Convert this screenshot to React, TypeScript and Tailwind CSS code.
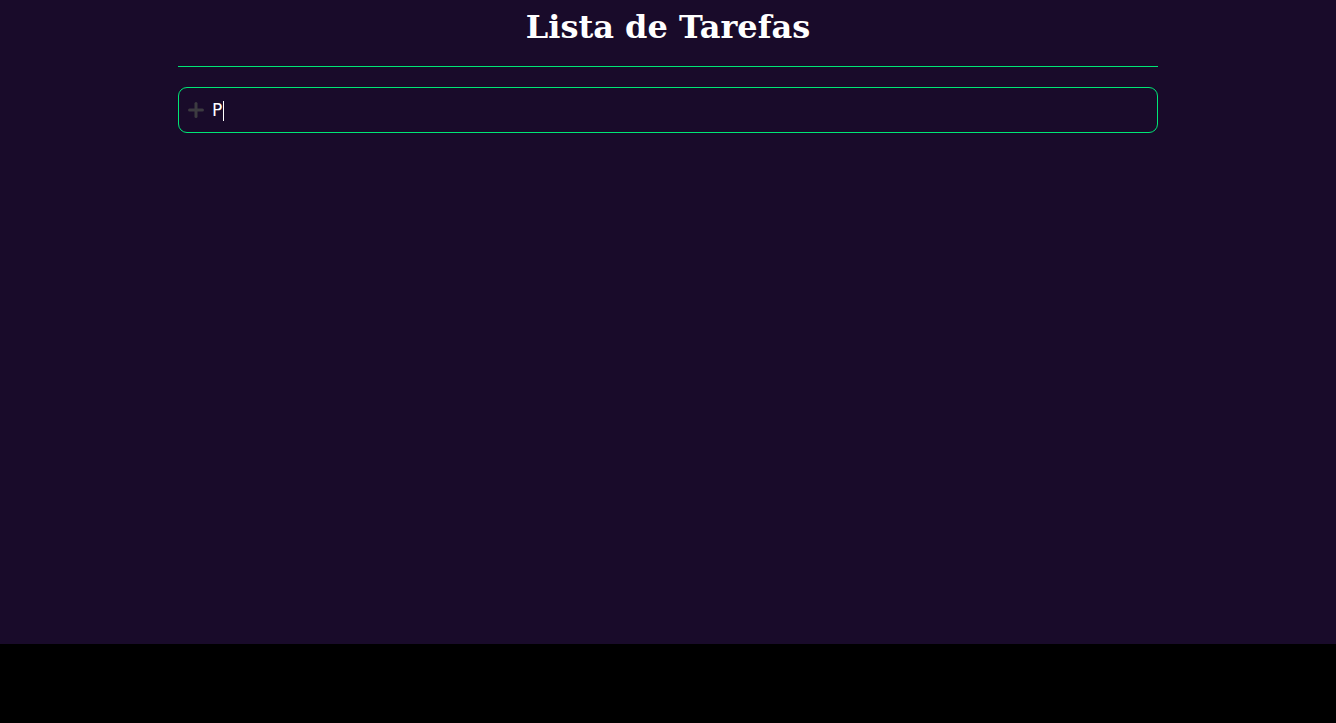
import { Plus } from "lucide-react";

export default function App() {
  return (
    <div className="min-h-[723px] bg-black">
      <div className="h-[644px] bg-[#190b2a] pt-[5px]">
        <div className="w-[980px] mx-auto">
          {/* Title */}
          <h1 className="text-center text-white text-[32px] font-bold leading-[44px] font-['DejaVu_Serif',serif]">
            Lista de Tarefas
          </h1>
          <div className="mt-[17px] border-b border-[#00e676]" />

          {/* New task input */}
          <div className="mt-[20px] h-[46px] flex items-center gap-[5px] pl-[6px] pr-3 rounded-[9px] border border-solid border-[#00e676]">
            <Plus className="w-[22px] h-[22px] text-[#3c3b40]" strokeWidth={3.3} />
            <div className="flex items-center pt-[2px] text-white text-[17px] font-['DejaVu_Sans',sans-serif]">
              <span>P</span>
              <span className="ml-[1px] w-px h-[20px] bg-white" />
            </div>
          </div>
        </div>
      </div>
    </div>
  );
}
